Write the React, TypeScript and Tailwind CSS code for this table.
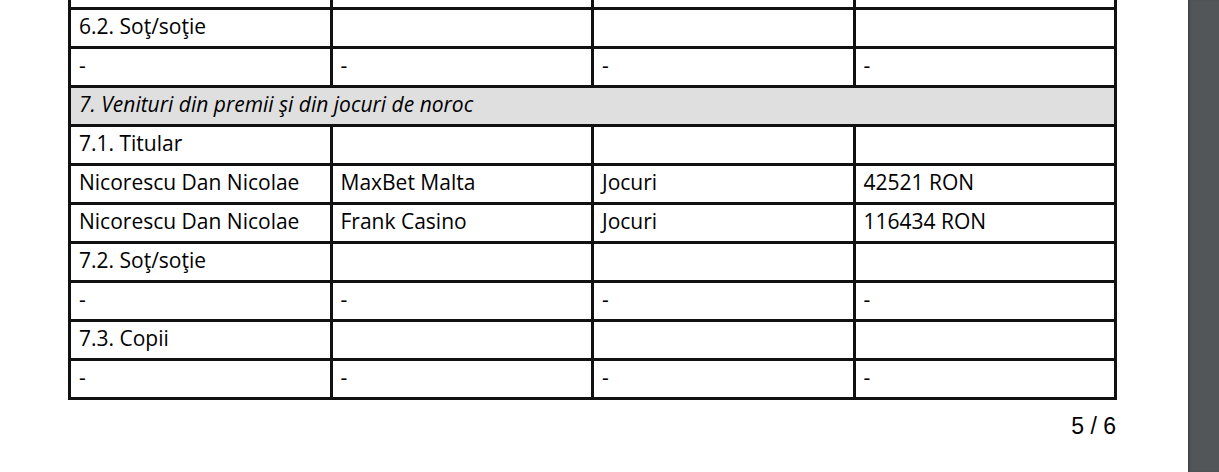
const rows: (string[] | { section: string })[] = [
  ['', '', '', ''],
  ['6.2. Soţ/soţie', '', '', ''],
  ['-', '-', '-', '-'],
  { section: '7. Venituri din premii şi din jocuri de noroc' },
  ['7.1. Titular', '', '', ''],
  ['Nicorescu Dan Nicolae', 'MaxBet Malta', 'Jocuri', '42521 RON'],
  ['Nicorescu Dan Nicolae', 'Frank Casino', 'Jocuri', '116434 RON'],
  ['7.2. Soţ/soţie', '', '', ''],
  ['-', '-', '-', '-'],
  ['7.3. Copii', '', '', ''],
  ['-', '-', '-', '-'],
]

export default function App() {
  return (
    <div className="flex h-[472px] w-[1219px] overflow-hidden bg-white">
      <div className="flex-1 bg-white">
        <div className="ml-[68px] -mt-[32px] w-[1049px] border-r-[3px] border-b-[3px] border-[#111] font-['Open_Sans',sans-serif] text-[21px] text-black">
          {rows.map((row, i) =>
            'section' in row ? (
              <div
                key={i}
                className="h-[39px] border-t-[3px] border-l-[3px] border-[#111] bg-[#dfdfdf] pl-2 pt-[2px] italic leading-[28px]"
              >
                {row.section}
              </div>
            ) : (
              <div key={i} className="grid grid-cols-4">
                {row.map((cell, j) => (
                  <div
                    key={j}
                    className="h-[39px] border-t-[3px] border-l-[3px] border-[#111] pl-2 pt-[2px] leading-[28px] whitespace-nowrap"
                  >
                    {cell}
                  </div>
                ))}
              </div>
            )
          )}
        </div>
        <div className="mt-[12px] w-[1116px] text-right font-['Liberation_Sans',Arial,sans-serif] text-[23px] leading-[28px] text-black">
          5 / 6
        </div>
      </div>
      <div className="w-[31px] bg-[#525659] shadow-[inset_3px_0_3px_-2px_rgba(0,0,0,0.35)]" />
    </div>
  )
}
